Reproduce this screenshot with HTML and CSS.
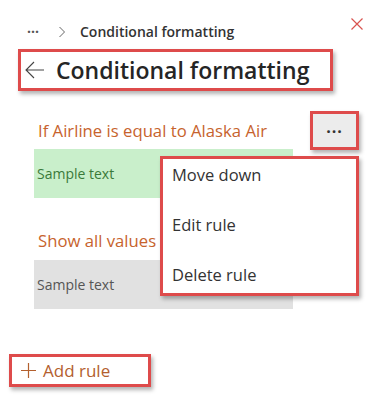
FILE: index.html
```html
<!DOCTYPE html>
<html>
<head>
<meta charset="utf-8">
<link rel="stylesheet" href="styles.css">
</head>
<body>
<div class="panel">
  <div class="topbar">
    <div class="crumbs">
      <span class="crumb-dots">···</span>
      <svg class="chev" width="8" height="12" viewBox="0 0 8 12"><path d="M1.5 1 L6.5 6 L1.5 11" fill="none" stroke="#666" stroke-width="1"/></svg>
      <span class="crumb-text">Conditional formatting</span>
    </div>
    <svg class="close" width="12" height="12" viewBox="0 0 12 12"><path d="M0.5 0.5 L11.5 11.5 M11.5 0.5 L0.5 11.5" stroke="#d9534f" stroke-width="1.2"/></svg>
  </div>
  <div class="title-box hl">
    <svg class="back" width="20" height="18" viewBox="0 0 20 18"><path d="M9 1 L1 9 L9 17 M1 9 H19" fill="none" stroke="#444" stroke-width="1.1"/></svg>
    <h1 class="title">Conditional formatting</h1>
  </div>
  <div class="rule">
    <div class="rule-head">
      <span class="rule-text">If Airline is equal to Alaska Air</span>
      <div class="more hl"><span class="more-inner">···</span></div>
    </div>
    <div class="sample green">Sample text</div>
  </div>
  <div class="rule rule2">
    <div class="rule-head">
      <span class="rule-text">Show all values as</span>
    </div>
    <div class="sample grey">Sample text</div>
  </div>
  <div class="add hl">
    <svg class="plus" width="15" height="15" viewBox="0 0 15 15"><path d="M7.5 0 V15 M0 7.5 H15" stroke="#b3602e" stroke-width="1.2"/></svg>
    <span>Add rule</span>
  </div>

  <div class="menu hl">
    <div class="menu-item">Move down</div>
    <div class="menu-item">Edit rule</div>
    <div class="menu-item">Delete rule</div>
  </div>
</div>
</body>
</html>
```
FILE: styles.css
```css
* { box-sizing: border-box; }
html, body { margin: 0; padding: 0; background: #fff; }
body { font-family: "Open Sans", "Noto Sans", sans-serif; color: #333; width: 370px; height: 403px; overflow: hidden; }
.panel { position: relative; width: 370px; height: 403px; }
.hl { border: 3px solid #de4b4b; box-shadow: 2px 3px 4px rgba(0,0,0,0.3); }
.topbar { display: flex; justify-content: space-between; align-items: flex-start; padding: 18px 7px 0 27px; height: 49px; }
.crumbs { display: flex; align-items: center; margin-top: 5px; }
.crumb-dots { font-size: 14px; color: #555; width: 16px; font-weight: 700; line-height: 18px; }
.chev { margin-left: 15px; margin-right: 14px; }
.crumb-text { font-size: 14px; color: #333; line-height: 18px; font-weight: 600; }
.title-box { margin-left: 18px; width: 315px; height: 42px; display: flex; align-items: center; padding-left: 4px; }
.back { margin-right: 11px; }
.title { margin: 0; font-size: 23px; font-weight: 600; color: #252525; line-height: 30px; }
.rule { margin-left: 34px; }
.rule-head { display: flex; align-items: center; justify-content: space-between; height: 58px; padding-top: 21px; margin-right: 11px; }
.rule-text { font-size: 16.7px; color: #c7632d; margin-left: 4px; line-height: 24px; }
.more { width: 49px; height: 39px; flex-shrink: 0; }
.more-inner { width: 100%; height: 100%; background: #ececec; display: flex; align-items: center; justify-content: center; font-size: 16px; font-weight: 700; color: #333; letter-spacing: 1px; }
.sample { width: 259px; height: 49px; display: flex; align-items: center; padding-left: 3px; font-size: 14px; }
.green { background: #c9efcb; color: #3a7a3a; }
.grey { background: #e1e1e1; color: #555; }
.rule2 .rule-head { height: 62px; padding-top: 24px; }
.add { margin-left: 9px; margin-top: 45px; width: 142px; height: 33px; display: flex; align-items: center; padding-left: 9px; color: #b3602e; font-size: 17px; }
.plus { margin-right: 7px; }
.menu { position: absolute; left: 160px; top: 156px; width: 199px; height: 140px; background: #fff; padding-top: 4px; display: flex; flex-direction: column; gap: 26px; }
.menu-item { height: 24px; line-height: 24px; padding-left: 9px; font-size: 16.5px; color: #333; }
```
